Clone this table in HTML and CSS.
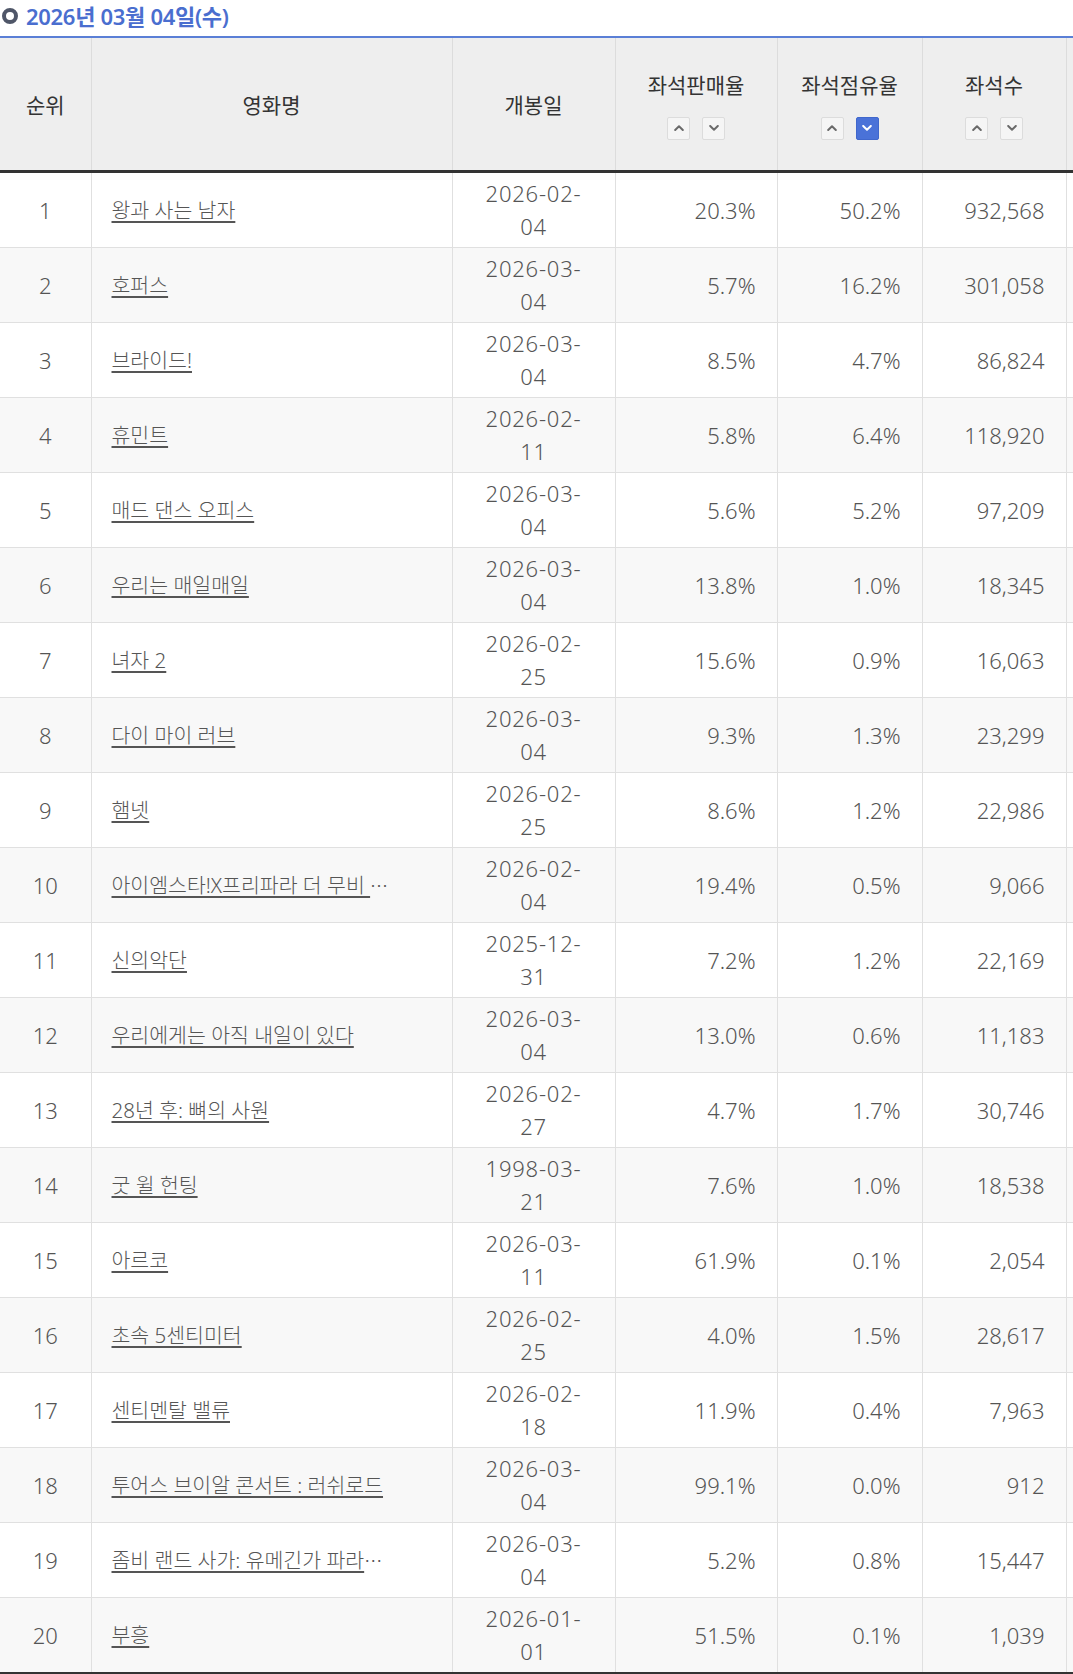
FILE: index.html
```html
<!DOCTYPE html>
<html lang="ko">
<head>
<meta charset="utf-8">
<title>좌석점유율 - 2026년 03월 04일(수)</title>
<link rel="stylesheet" href="styles.css">
</head>
<body>
<div class="page">
  <h2 class="day-title"><span class="ring"></span>2026년 03월 04일(수)</h2>
  <div class="board">
    <table class="rank-table">
      <colgroup>
        <col class="c-rank"><col class="c-title"><col class="c-date"><col class="c-rate"><col class="c-share"><col class="c-seat"><col class="c-more">
      </colgroup>
      <thead>
        <tr>
          <th>순위</th>
          <th>영화명</th>
          <th>개봉일</th>
          <th><div class="th-label">좌석판매율</div>
            <div class="sorter">
              <span class="sort-btn"><svg width="10" height="6" viewBox="0 0 10 6"><polyline points="1.2,5 5,1.3 8.8,5"/></svg></span>
              <span class="sort-btn"><svg width="10" height="6" viewBox="0 0 10 6"><polyline points="1.2,1 5,4.7 8.8,1"/></svg></span>
            </div>
          </th>
          <th><div class="th-label">좌석점유율</div>
            <div class="sorter">
              <span class="sort-btn"><svg width="10" height="6" viewBox="0 0 10 6"><polyline points="1.2,5 5,1.3 8.8,5"/></svg></span>
              <span class="sort-btn is-active"><svg width="10" height="6" viewBox="0 0 10 6"><polyline points="1.2,1 5,4.7 8.8,1"/></svg></span>
            </div>
          </th>
          <th><div class="th-label">좌석수</div>
            <div class="sorter">
              <span class="sort-btn"><svg width="10" height="6" viewBox="0 0 10 6"><polyline points="1.2,5 5,1.3 8.8,5"/></svg></span>
              <span class="sort-btn"><svg width="10" height="6" viewBox="0 0 10 6"><polyline points="1.2,1 5,4.7 8.8,1"/></svg></span>
            </div>
          </th>
          <th></th>
        </tr>
      </thead>
      <tbody>
        <tr><td class="rank">1</td><td class="title"><a href="#">왕과 사는 남자</a></td><td class="date">2026-02-<br>04</td><td class="num">20.3%</td><td class="num">50.2%</td><td class="num">932,568</td><td></td></tr>
        <tr><td class="rank">2</td><td class="title"><a href="#">호퍼스</a></td><td class="date">2026-03-<br>04</td><td class="num">5.7%</td><td class="num">16.2%</td><td class="num">301,058</td><td></td></tr>
        <tr><td class="rank">3</td><td class="title"><a href="#">브라이드!</a></td><td class="date">2026-03-<br>04</td><td class="num">8.5%</td><td class="num">4.7%</td><td class="num">86,824</td><td></td></tr>
        <tr><td class="rank">4</td><td class="title"><a href="#">휴민트</a></td><td class="date">2026-02-<br>11</td><td class="num">5.8%</td><td class="num">6.4%</td><td class="num">118,920</td><td></td></tr>
        <tr><td class="rank">5</td><td class="title"><a href="#">매드 댄스 오피스</a></td><td class="date">2026-03-<br>04</td><td class="num">5.6%</td><td class="num">5.2%</td><td class="num">97,209</td><td></td></tr>
        <tr><td class="rank">6</td><td class="title"><a href="#">우리는 매일매일</a></td><td class="date">2026-03-<br>04</td><td class="num">13.8%</td><td class="num">1.0%</td><td class="num">18,345</td><td></td></tr>
        <tr><td class="rank">7</td><td class="title"><a href="#">녀자 2</a></td><td class="date">2026-02-<br>25</td><td class="num">15.6%</td><td class="num">0.9%</td><td class="num">16,063</td><td></td></tr>
        <tr><td class="rank">8</td><td class="title"><a href="#">다이 마이 러브</a></td><td class="date">2026-03-<br>04</td><td class="num">9.3%</td><td class="num">1.3%</td><td class="num">23,299</td><td></td></tr>
        <tr><td class="rank">9</td><td class="title"><a href="#">햄넷</a></td><td class="date">2026-02-<br>25</td><td class="num">8.6%</td><td class="num">1.2%</td><td class="num">22,986</td><td></td></tr>
        <tr><td class="rank">10</td><td class="title"><a href="#">아이엠스타!X프리파라 더 무비 </a><span class="more">…</span></td><td class="date">2026-02-<br>04</td><td class="num">19.4%</td><td class="num">0.5%</td><td class="num">9,066</td><td></td></tr>
        <tr><td class="rank">11</td><td class="title"><a href="#">신의악단</a></td><td class="date">2025-12-<br>31</td><td class="num">7.2%</td><td class="num">1.2%</td><td class="num">22,169</td><td></td></tr>
        <tr><td class="rank">12</td><td class="title"><a href="#">우리에게는 아직 내일이 있다</a></td><td class="date">2026-03-<br>04</td><td class="num">13.0%</td><td class="num">0.6%</td><td class="num">11,183</td><td></td></tr>
        <tr><td class="rank">13</td><td class="title"><a href="#">28년 후: 뼈의 사원</a></td><td class="date">2026-02-<br>27</td><td class="num">4.7%</td><td class="num">1.7%</td><td class="num">30,746</td><td></td></tr>
        <tr><td class="rank">14</td><td class="title"><a href="#">굿 윌 헌팅</a></td><td class="date">1998-03-<br>21</td><td class="num">7.6%</td><td class="num">1.0%</td><td class="num">18,538</td><td></td></tr>
        <tr><td class="rank">15</td><td class="title"><a href="#">아르코</a></td><td class="date">2026-03-<br>11</td><td class="num">61.9%</td><td class="num">0.1%</td><td class="num">2,054</td><td></td></tr>
        <tr><td class="rank">16</td><td class="title"><a href="#">초속 5센티미터</a></td><td class="date">2026-02-<br>25</td><td class="num">4.0%</td><td class="num">1.5%</td><td class="num">28,617</td><td></td></tr>
        <tr><td class="rank">17</td><td class="title"><a href="#">센티멘탈 밸류</a></td><td class="date">2026-02-<br>18</td><td class="num">11.9%</td><td class="num">0.4%</td><td class="num">7,963</td><td></td></tr>
        <tr><td class="rank">18</td><td class="title"><a href="#">투어스 브이알 콘서트 : 러쉬로드</a></td><td class="date">2026-03-<br>04</td><td class="num">99.1%</td><td class="num">0.0%</td><td class="num">912</td><td></td></tr>
        <tr><td class="rank">19</td><td class="title"><a href="#">좀비 랜드 사가: 유메긴가 파라</a><span class="more">…</span></td><td class="date">2026-03-<br>04</td><td class="num">5.2%</td><td class="num">0.8%</td><td class="num">15,447</td><td></td></tr>
        <tr><td class="rank">20</td><td class="title"><a href="#">부흥</a></td><td class="date">2026-01-<br>01</td><td class="num">51.5%</td><td class="num">0.1%</td><td class="num">1,039</td><td></td></tr>
      </tbody>
    </table>
  </div>
</div>
</body>
</html>
```

FILE: styles.css
```css
html, body {
  margin: 0;
  padding: 0;
  background: #fff;
}

body {
  font-family: "Noto Sans", "Noto Sans CJK KR", sans-serif;
  color: #555;
}

.page {
  width: 100%;
  overflow: hidden;
}

.day-title {
  display: flex;
  align-items: center;
  gap: 8px;
  box-sizing: border-box;
  height: 36px;
  margin: 0;
  padding: 0 0 4px 2px;
  font-size: 22px;
  line-height: 30px;
  font-weight: 600;
  color: #4a6ecf;
  letter-spacing: -0.3px;
}

.ring {
  flex: none;
  width: 16px;
  height: 16px;
  box-sizing: border-box;
  border: 4px solid #4f5668;
  border-radius: 50%;
  filter: blur(0.4px);
  margin-top: -1px;
}

.board {
  overflow: hidden;
  border-top: 2px solid #5a7fd6;
}

.rank-table {
  border-collapse: collapse;
  table-layout: fixed;
  width: 1210px;
}

.c-rank { width: 91px; }
.c-title { width: 361px; }
.c-date { width: 163px; }
.c-rate { width: 162px; }
.c-share { width: 145px; }
.c-seat { width: 144px; }
.c-more { width: 144px; }

.rank-table th {
  height: 132px;
  padding: 0;
  background: #eeeeee;
  font-family: "Noto Sans CJK KR", sans-serif;
  font-size: 21px;
  font-weight: 400;
  color: #333;
  text-align: center;
  vertical-align: middle;
  border-left: 1px solid #dcdcdc;
  border-bottom: 3px solid #333;
}

.rank-table th:first-child {
  border-left: none;
}

.th-label {
  line-height: 30px;
}

.sorter {
  display: flex;
  justify-content: center;
  gap: 12px;
  margin-top: 18px;
}

.sort-btn {
  display: flex;
  align-items: center;
  justify-content: center;
  width: 23px;
  height: 23px;
  box-sizing: border-box;
  background: #f5f5f5;
  border: 1px solid #dcdcdc;
  border-radius: 2px;
}

.sort-btn svg polyline {
  fill: none;
  stroke: #6a6a6a;
  stroke-width: 2;
  stroke-linecap: round;
  stroke-linejoin: round;
}

.sort-btn.is-active {
  background: #4a72d8;
  border-color: #4067cc;
}

.sort-btn.is-active svg polyline {
  stroke: #fff;
}

.rank-table td {
  padding: 4px 21px;
  line-height: 33px;
  font-size: 22px;
  font-weight: 300;
  color: #555;
  vertical-align: middle;
  border-left: 1px solid #e0e0e0;
  border-bottom: 1px solid #e0e0e0;
  background: #fff;
}

.rank-table td:first-child {
  border-left: none;
}

.rank-table tbody tr:nth-child(even) td {
  background: #f8f8f8;
}

.rank-table tbody tr:last-child td {
  border-bottom: 3px solid #333;
}

.rank-table td.rank {
  text-align: center;
  padding-left: 0;
  padding-right: 0;
}

.rank-table td.title {
  padding-left: 20px;
  padding-right: 10px;
  font-size: 20.5px;
  white-space: nowrap;
  overflow: hidden;
}

.rank-table td.title a {
  color: #555;
  text-decoration: underline;
  text-underline-offset: 3px;
}

.rank-table td.title .more {
  font-family: "Noto Sans CJK JP", sans-serif;
  font-size: 18px;
}

.rank-table td.date {
  text-align: center;
  padding-left: 10px;
  padding-right: 10px;
  letter-spacing: 0.8px;
}

.rank-table td.num {
  text-align: right;
}
```
